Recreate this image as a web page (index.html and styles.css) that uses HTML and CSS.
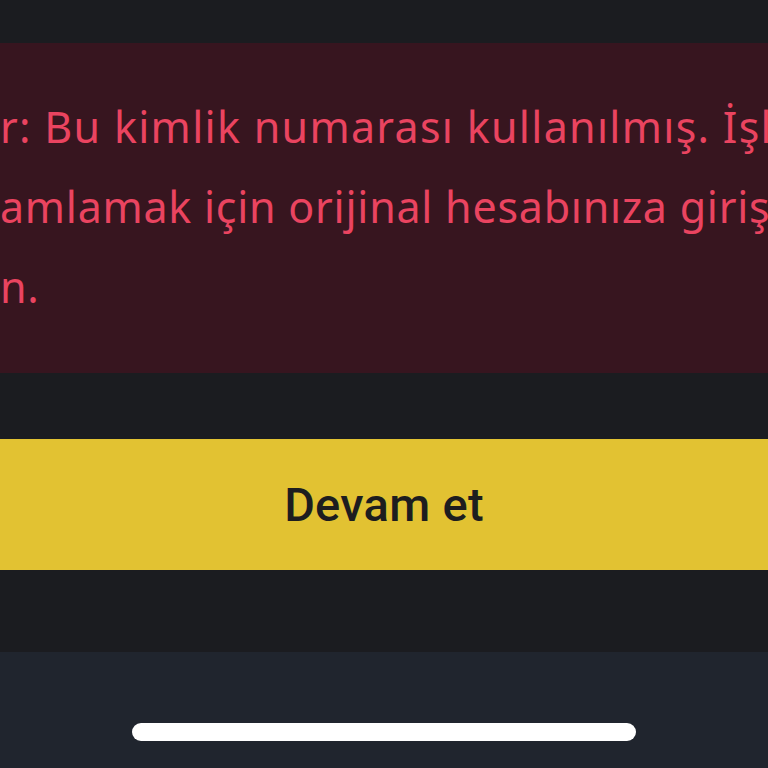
FILE: index.html
```html
<!DOCTYPE html>
<html lang="tr">
<head>
<meta charset="utf-8">
<link rel="stylesheet" href="styles.css">
</head>
<body>
<div class="screen">
  <div class="top-gap"></div>
  <div class="error-panel">
    <div class="line line-wide">r: Bu kimlik numarası kullanılmış. İşl</div>
    <div class="line">amlamak için orijinal hesabınıza giriş</div>
    <div class="line">n.</div>
  </div>
  <div class="gap-a"></div>
  <button class="primary">Devam et</button>
  <div class="gap-b"></div>
  <div class="home-bar">
    <div class="indicator"></div>
  </div>
</div>
</body>
</html>
```

FILE: styles.css
```css
html, body {
  margin: 0;
  padding: 0;
  background: #1b1c20;
}
.screen {
  width: 768px;
  height: 768px;
  overflow: hidden;
  display: flex;
  flex-direction: column;
}
.top-gap {
  height: 43px;
  flex: none;
}
.error-panel {
  flex: none;
  height: 330px;
  box-sizing: border-box;
  padding: 44px 0 0 0;
  background: #37151f;
  color: #ea4460;
  font-family: "Noto Sans", "Open Sans", sans-serif;
  font-size: 43px;
  letter-spacing: 0.75px;
  line-height: 80px;
  overflow: hidden;
}
.line {
  white-space: nowrap;
}
.line-wide {
  letter-spacing: 1.3px;
}
.gap-a {
  height: 66px;
  flex: none;
}
.primary {
  flex: none;
  height: 131px;
  width: 100%;
  border: 0;
  margin: 0;
  padding: 0;
  background: #e2c232;
  color: #1d1d1f;
  font-family: Roboto, "Liberation Sans", sans-serif;
  font-weight: 500;
  font-size: 47px;
  letter-spacing: 0.3px;
}
.gap-b {
  height: 82px;
  flex: none;
}
.home-bar {
  flex: 1;
  background: #20252e;
  display: flex;
  justify-content: center;
  padding-top: 71px;
  box-sizing: border-box;
}
.indicator {
  width: 504px;
  height: 18px;
  border-radius: 9px;
  background: #ffffff;
}
```
